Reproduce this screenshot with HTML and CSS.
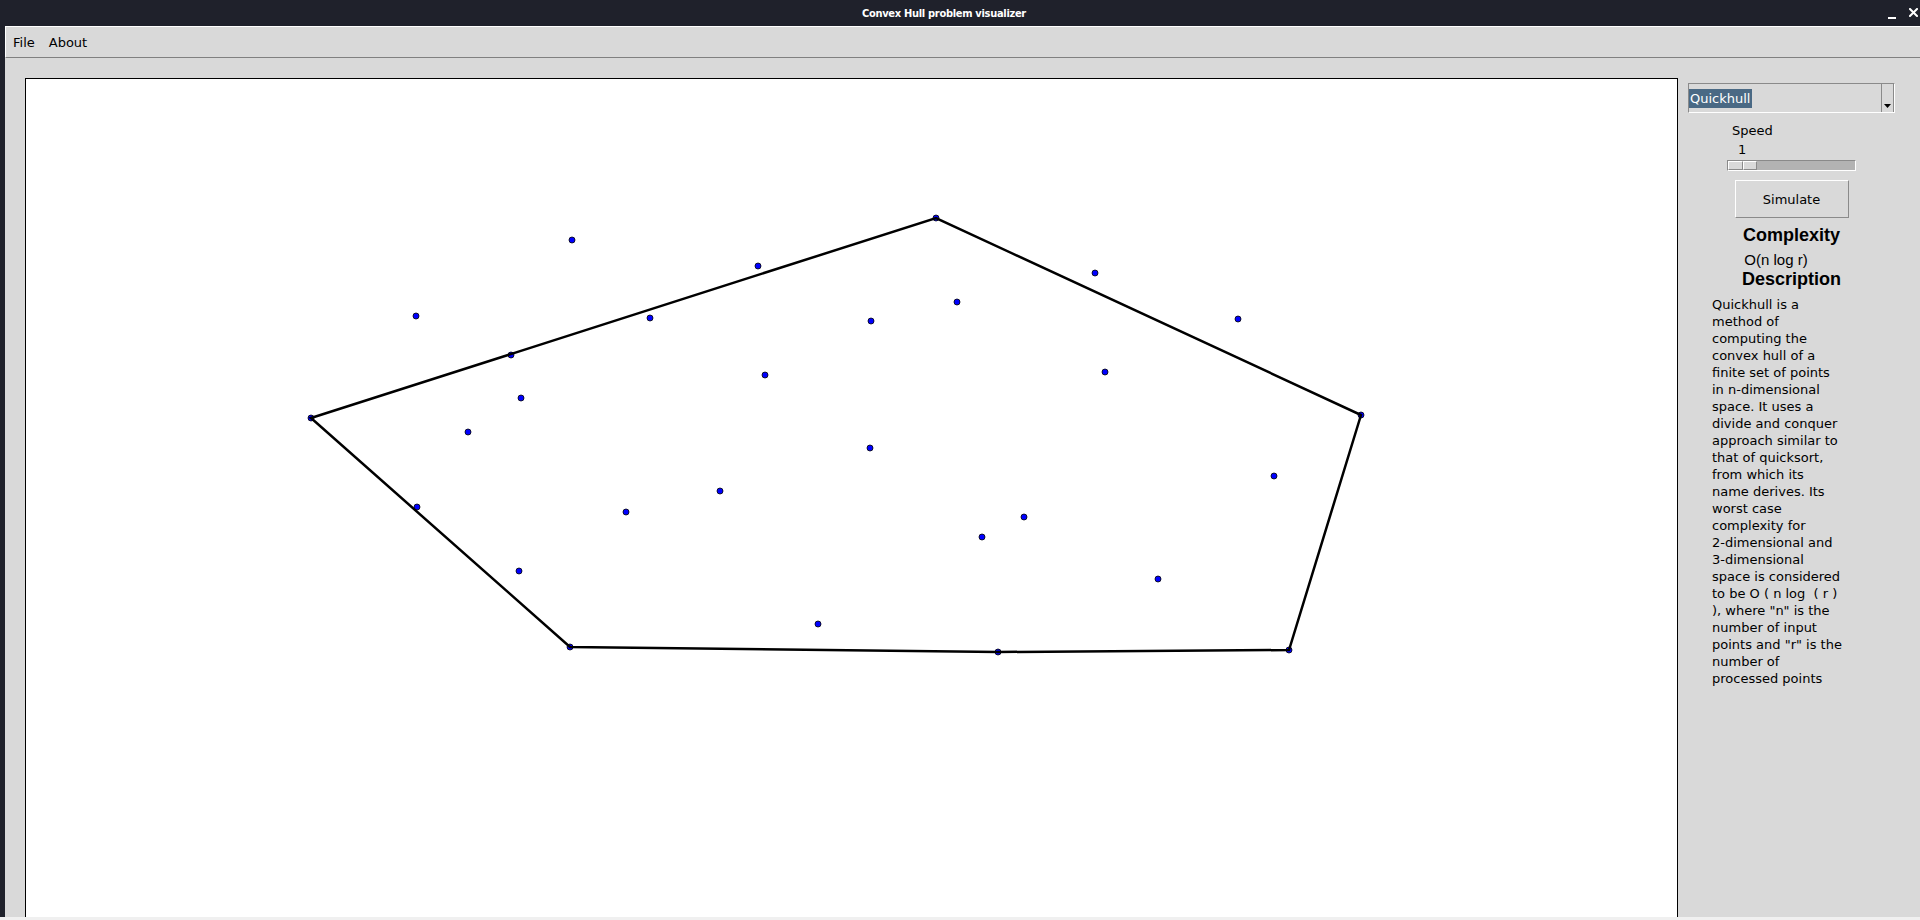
FILE: index.html
```html
<!DOCTYPE html>
<html>
<head>
<meta charset="utf-8">
<title>Convex Hull problem visualizer</title>
<link rel="stylesheet" href="styles.css">
</head>
<body>
<div class="screen">
  <header class="titlebar">
    <span class="title">Convex Hull problem visualizer</span>
    <div class="win-controls">
      <svg class="ctl-min" width="8" height="8" viewBox="0 0 8 8"><rect x="0" y="5" width="8" height="2" fill="#ffffff"/></svg>
      <svg class="ctl-close" width="9" height="9" viewBox="0 0 9 9"><path d="M1 1 L8 8 M8 1 L1 8" stroke="#ffffff" stroke-width="2" stroke-linecap="square"/></svg>
    </div>
  </header>
  <div class="window">
    <nav class="menubar">
      <span class="menu-item">File</span>
      <span class="menu-item">About</span>
    </nav>
    <main class="content">
      <div class="canvas">
        <svg class="plot" width="1651" height="838" viewBox="26 79 1651 838">
          <g class="pts">
            <circle cx="572" cy="240" r="3"/>
            <circle cx="758" cy="266" r="3"/>
            <circle cx="416" cy="316" r="3"/>
            <circle cx="650" cy="318" r="3"/>
            <circle cx="511" cy="355" r="3"/>
            <circle cx="765" cy="375" r="3"/>
            <circle cx="521" cy="398" r="3"/>
            <circle cx="311" cy="418" r="3"/>
            <circle cx="468" cy="432" r="3"/>
            <circle cx="417" cy="507" r="3"/>
            <circle cx="720" cy="491" r="3"/>
            <circle cx="626" cy="512" r="3"/>
            <circle cx="519" cy="571" r="3"/>
            <circle cx="570" cy="647" r="3"/>
            <circle cx="818" cy="624" r="3"/>
            <circle cx="936" cy="218" r="3"/>
            <circle cx="1095" cy="273" r="3"/>
            <circle cx="957" cy="302" r="3"/>
            <circle cx="871" cy="321" r="3"/>
            <circle cx="1238" cy="319" r="3"/>
            <circle cx="1105" cy="372" r="3"/>
            <circle cx="1361" cy="415" r="3"/>
            <circle cx="870" cy="448" r="3"/>
            <circle cx="1274" cy="476" r="3"/>
            <circle cx="1024" cy="517" r="3"/>
            <circle cx="982" cy="537" r="3"/>
            <circle cx="1158" cy="579" r="3"/>
            <circle cx="1289" cy="650" r="3"/>
            <circle cx="998" cy="652" r="3"/>
          </g>
          <polygon class="hull" points="311,418 936,218 1361,415 1289,650 998,652 570,647"/>
        </svg>
      </div>
      <aside class="panel">
        <div class="combo">
          <div class="combo-field"><span class="combo-sel">Quickhull</span></div>
          <div class="combo-btn"><svg width="8" height="5" viewBox="0 0 8 5"><path d="M0 0 H7 L3.5 4 Z" fill="#000"/></svg></div>
        </div>
        <div class="scale">
          <div class="scale-label">Speed</div>
          <div class="scale-value">1</div>
          <div class="trough">
            <div class="slider"><span class="slider-half left"></span><span class="slider-half right"></span></div>
          </div>
        </div>
        <div class="button">Simulate</div>
        <div class="heading">Complexity</div>
        <div class="complexity">O(n log r)</div>
        <div class="heading desc-heading">Description</div>
        <div class="desc">Quickhull is a<br>method of<br>computing the<br>convex hull of a<br>finite set of points<br>in n-dimensional<br>space. It uses a<br>divide and conquer<br>approach similar to<br>that of quicksort,<br>from which its<br>name derives. Its<br>worst case<br>complexity for<br>2-dimensional and<br>3-dimensional<br>space is considered<br>to be O ( n log &nbsp;( r )<br>), where "n" is the<br>number of input<br>points and "r" is the<br>number of<br>processed points</div>
      </aside>
    </main>
  </div>
  <div class="bottom-strip"></div>
</div>
</body>
</html>
```

FILE: styles.css
```css
html, body {
  margin: 0;
  padding: 0;
}

body {
  background: #1f212b;
  font-family: "DejaVu Sans", sans-serif;
  font-size: 13px;
  color: #000;
}

.screen {
  width: 1920px;
  height: 920px;
  display: flex;
  flex-direction: column;
  overflow: hidden;
}

.titlebar {
  height: 26px;
  flex: none;
  display: flex;
  align-items: center;
  background: #1f212b;
  color: #fff;
}

.title {
  margin-left: 862px;
  font-family: "DejaVu Sans Condensed", "DejaVu Sans", sans-serif;
  font-stretch: condensed;
  font-weight: bold;
  font-size: 11px;
  letter-spacing: -0.3px;
  line-height: 13px;
  white-space: nowrap;
}

.win-controls {
  margin-left: auto;
  margin-right: 2px;
  display: flex;
  align-items: center;
  gap: 13px;
}

.ctl-min {
  margin-top: 6px;
}

.ctl-close {
  margin-top: -2px;
}

.window {
  flex: 1;
  min-height: 0;
  margin-left: 5px;
  background: #d9d9d9;
  display: flex;
  flex-direction: column;
}

.menubar {
  height: 30px;
  flex: none;
  border-top: 1px solid #ffffff;
  border-left: 1px solid #ffffff;
  border-bottom: 1px solid #808080;
  display: flex;
  align-items: center;
  line-height: 15px;
}

.menu-item {
  padding: 0 7px;
}

.content {
  flex: 1;
  min-height: 0;
  display: flex;
  align-items: stretch;
}

.canvas {
  margin: 20px 0 0 20px;
  width: 1651px;
  flex: none;
  background: #ffffff;
  border: 1px solid #000;
  border-bottom: none;
  overflow: hidden;
}

.plot {
  display: block;
}

.pts circle {
  fill: #0000ff;
  stroke: #000;
  stroke-width: 0.8;
}

.hull {
  fill: none;
  stroke: #000;
  stroke-width: 2.5;
  stroke-linejoin: miter;
}

.panel {
  flex: none;
  align-self: flex-start;
  width: 207px;
  padding: 25px 25px 0 10px;
  display: flex;
  flex-direction: column;
  align-items: center;
}

.combo {
  width: 207px;
  height: 30px;
  box-sizing: border-box;
  border: 1px solid;
  border-color: #8a8a8a #ffffff #ffffff #8a8a8a;
  display: flex;
  align-items: stretch;
}

.combo-field {
  flex: 1;
  display: flex;
  align-items: center;
}

.combo-sel {
  background: #4a6984;
  color: #ffffff;
  padding: 2px 2px 2px 1px;
  line-height: 15px;
}

.combo-btn {
  width: 11px;
  border-left: 1px solid #8a8a8a;
  border-right: 1px solid #8a8a8a;
  display: flex;
  align-items: flex-end;
  justify-content: center;
  padding-bottom: 3px;
}

.combo-btn svg {
  display: block;
}

.scale {
  width: 129px;
  margin-top: 10px;
  display: flex;
  flex-direction: column;
  line-height: 15px;
}

.scale-label {
  padding-left: 5px;
}

.scale-value {
  margin-top: 4px;
  padding-left: 11px;
}

.trough {
  margin-top: 3px;
  height: 11px;
  box-sizing: border-box;
  border: 1px solid;
  border-color: #8a8a8a #ffffff #ffffff #8a8a8a;
  background: #b3b3b3;
  display: flex;
}

.slider {
  width: 29px;
  height: 9px;
  display: flex;
}

.slider-half {
  flex: 1;
  box-sizing: border-box;
  background: #d9d9d9;
  border: 1px solid;
  border-color: #ffffff #8a8a8a #8a8a8a #ffffff;
}

.button {
  margin-top: 9px;
  width: 114px;
  height: 38px;
  box-sizing: border-box;
  border: 1px solid;
  border-color: #ffffff #8a8a8a #8a8a8a #ffffff;
  background: #d9d9d9;
  display: flex;
  align-items: center;
  justify-content: center;
}

.heading {
  margin-top: 7px;
  font-family: "Liberation Sans", Arial, sans-serif;
  font-weight: bold;
  font-size: 18px;
  line-height: 21px;
}

.complexity {
  margin-top: 5px;
  margin-right: 31px;
  font-family: "Liberation Sans", Arial, sans-serif;
  font-size: 15px;
  line-height: 17px;
}

.desc-heading {
  margin-top: 1px;
}

.desc {
  margin-top: 6px;
  width: 159px;
  line-height: 17px;
  text-align: left;
  white-space: nowrap;
}

.bottom-strip {
  height: 3px;
  flex: none;
  background: #f0f0f0;
}
```
